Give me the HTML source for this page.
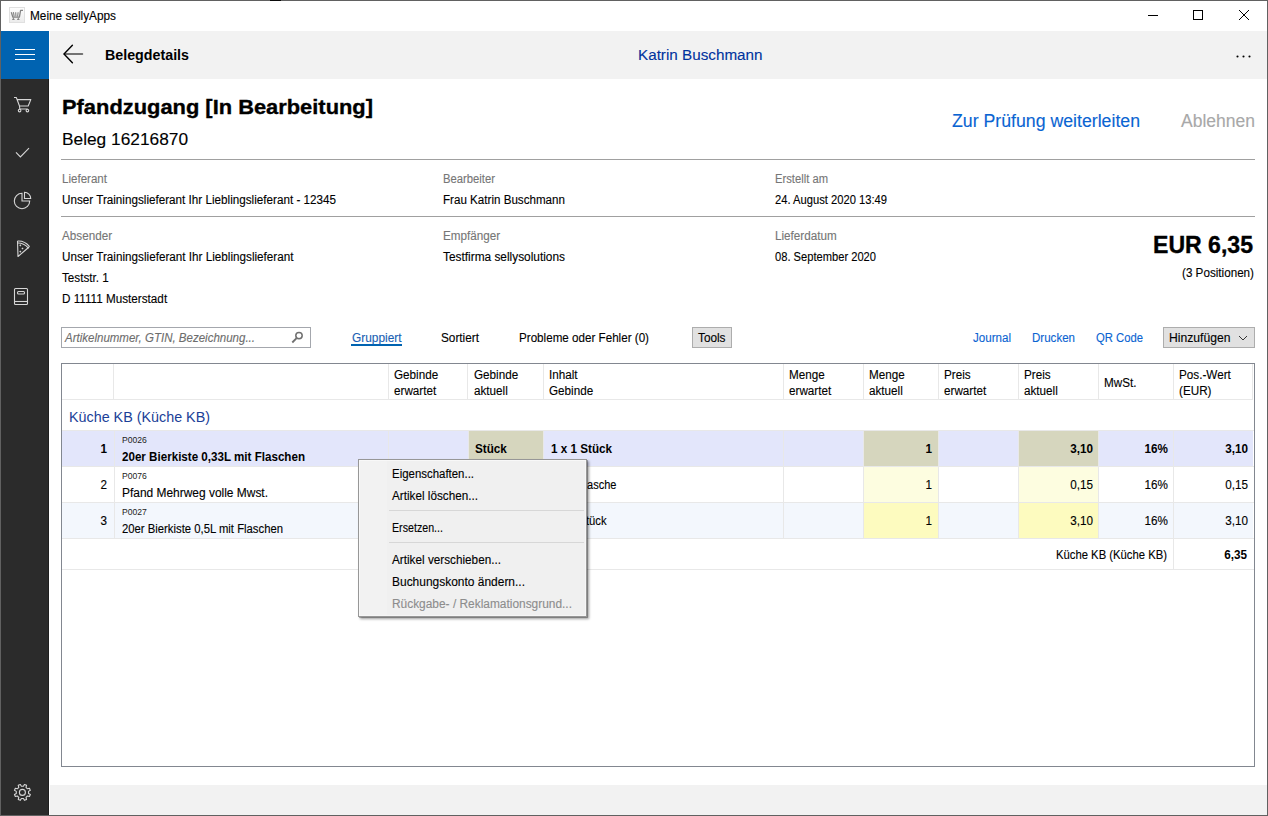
<!DOCTYPE html>
<html><head><meta charset="utf-8"><style>
html,body{margin:0;padding:0;}
body{width:1268px;height:816px;position:relative;overflow:hidden;font-family:"Liberation Sans", sans-serif;background:#fff;}
.b{position:absolute;}
svg{position:absolute;left:0;top:0;}
text{font-family:"Liberation Sans", sans-serif;}
</style></head><body>
<div class="b" style="left:0px;top:0px;width:1268px;height:816px;background:#ffffff;"></div>
<div class="b" style="left:1px;top:31px;width:48px;height:48px;background:#0063b1;"></div>
<div class="b" style="left:1px;top:79px;width:47px;height:736px;background:#2b2b2b;"></div>
<div class="b" style="left:48px;top:79px;width:1px;height:736px;background:#1f1f1f;"></div>
<div class="b" style="left:50px;top:31px;width:1217px;height:48px;background:#f2f2f2;"></div>
<div class="b" style="left:50px;top:785px;width:1217px;height:30px;background:#f2f2f2;"></div>
<div class="b" style="left:0px;top:0px;width:1268px;height:1px;background:#616161;"></div>
<div class="b" style="left:0px;top:815px;width:1268px;height:1px;background:#616161;"></div>
<div class="b" style="left:0px;top:0px;width:1px;height:816px;background:#616161;"></div>
<div class="b" style="left:1267px;top:0px;width:1px;height:816px;background:#616161;"></div>
<div class="b" style="left:270px;top:0px;width:11px;height:1px;background:#0a0a0a;"></div>
<div class="b" style="left:61px;top:159px;width:1194px;height:1px;background:#a0a0a0;"></div>
<div class="b" style="left:61px;top:216px;width:1194px;height:1px;background:#a0a0a0;"></div>
<div class="b" style="left:61px;top:327px;width:250px;height:21px;background:#fff;border:1px solid #a4a7ad;box-sizing:border-box;"></div>
<div class="b" style="left:351px;top:344px;width:51px;height:2px;background:#0063b1;"></div>
<div class="b" style="left:692px;top:327px;width:40px;height:21px;background:#e1e1e1;border:1px solid #adadad;box-sizing:border-box;"></div>
<div class="b" style="left:1163px;top:327px;width:92px;height:21px;background:#e1e1e1;border:1px solid #adadad;box-sizing:border-box;"></div>
<div class="b" style="left:61px;top:363px;width:1194px;height:404px;background:#fff;border:1px solid #828790;box-sizing:border-box;"></div>
<div class="b" style="left:62px;top:399px;width:1191px;height:1px;background:#e8e8e8;"></div>
<div class="b" style="left:113px;top:364px;width:1px;height:35px;background:#e8e8e8;"></div>
<div class="b" style="left:388px;top:364px;width:1px;height:35px;background:#e8e8e8;"></div>
<div class="b" style="left:467px;top:364px;width:1px;height:35px;background:#e8e8e8;"></div>
<div class="b" style="left:543px;top:364px;width:1px;height:35px;background:#e8e8e8;"></div>
<div class="b" style="left:783px;top:364px;width:1px;height:35px;background:#e8e8e8;"></div>
<div class="b" style="left:863px;top:364px;width:1px;height:35px;background:#e8e8e8;"></div>
<div class="b" style="left:938px;top:364px;width:1px;height:35px;background:#e8e8e8;"></div>
<div class="b" style="left:1018px;top:364px;width:1px;height:35px;background:#e8e8e8;"></div>
<div class="b" style="left:1098px;top:364px;width:1px;height:35px;background:#e8e8e8;"></div>
<div class="b" style="left:1173px;top:364px;width:1px;height:35px;background:#e8e8e8;"></div>
<div class="b" style="left:1252px;top:364px;width:1px;height:35px;background:#e8e8e8;"></div>
<div class="b" style="left:62px;top:430px;width:1192px;height:1px;background:#e8e8e8;"></div>
<div class="b" style="left:62px;top:431px;width:1191px;height:35px;background:#e3e6fb;"></div>
<div class="b" style="left:469px;top:431px;width:74px;height:35px;background:#d6d6be;"></div>
<div class="b" style="left:864px;top:431px;width:74px;height:35px;background:#d6d6be;"></div>
<div class="b" style="left:1019px;top:431px;width:79px;height:35px;background:#d6d6be;"></div>
<div class="b" style="left:114px;top:431px;width:1px;height:35px;background:#e8e8e8;"></div>
<div class="b" style="left:388px;top:431px;width:1px;height:35px;background:#e8e8e8;"></div>
<div class="b" style="left:468px;top:431px;width:1px;height:35px;background:#e8e8e8;"></div>
<div class="b" style="left:543px;top:431px;width:1px;height:35px;background:#e8e8e8;"></div>
<div class="b" style="left:783px;top:431px;width:1px;height:35px;background:#e8e8e8;"></div>
<div class="b" style="left:863px;top:431px;width:1px;height:35px;background:#e8e8e8;"></div>
<div class="b" style="left:938px;top:431px;width:1px;height:35px;background:#e8e8e8;"></div>
<div class="b" style="left:1018px;top:431px;width:1px;height:35px;background:#e8e8e8;"></div>
<div class="b" style="left:1098px;top:431px;width:1px;height:35px;background:#e8e8e8;"></div>
<div class="b" style="left:1173px;top:431px;width:1px;height:35px;background:#e8e8e8;"></div>
<div class="b" style="left:62px;top:466px;width:1192px;height:1px;background:#e8e8e8;"></div>
<div class="b" style="left:62px;top:467px;width:1191px;height:35px;background:#ffffff;"></div>
<div class="b" style="left:469px;top:467px;width:74px;height:35px;background:#fdfde0;"></div>
<div class="b" style="left:864px;top:467px;width:74px;height:35px;background:#fdfde0;"></div>
<div class="b" style="left:1019px;top:467px;width:79px;height:35px;background:#fdfde0;"></div>
<div class="b" style="left:114px;top:467px;width:1px;height:35px;background:#e8e8e8;"></div>
<div class="b" style="left:388px;top:467px;width:1px;height:35px;background:#e8e8e8;"></div>
<div class="b" style="left:468px;top:467px;width:1px;height:35px;background:#e8e8e8;"></div>
<div class="b" style="left:543px;top:467px;width:1px;height:35px;background:#e8e8e8;"></div>
<div class="b" style="left:783px;top:467px;width:1px;height:35px;background:#e8e8e8;"></div>
<div class="b" style="left:863px;top:467px;width:1px;height:35px;background:#e8e8e8;"></div>
<div class="b" style="left:938px;top:467px;width:1px;height:35px;background:#e8e8e8;"></div>
<div class="b" style="left:1018px;top:467px;width:1px;height:35px;background:#e8e8e8;"></div>
<div class="b" style="left:1098px;top:467px;width:1px;height:35px;background:#e8e8e8;"></div>
<div class="b" style="left:1173px;top:467px;width:1px;height:35px;background:#e8e8e8;"></div>
<div class="b" style="left:62px;top:502px;width:1192px;height:1px;background:#e8e8e8;"></div>
<div class="b" style="left:62px;top:503px;width:1191px;height:35px;background:#f3f7fd;"></div>
<div class="b" style="left:469px;top:503px;width:74px;height:35px;background:#fdfbbf;"></div>
<div class="b" style="left:864px;top:503px;width:74px;height:35px;background:#fdfbbf;"></div>
<div class="b" style="left:1019px;top:503px;width:79px;height:35px;background:#fdfbbf;"></div>
<div class="b" style="left:114px;top:503px;width:1px;height:35px;background:#e8e8e8;"></div>
<div class="b" style="left:388px;top:503px;width:1px;height:35px;background:#e8e8e8;"></div>
<div class="b" style="left:468px;top:503px;width:1px;height:35px;background:#e8e8e8;"></div>
<div class="b" style="left:543px;top:503px;width:1px;height:35px;background:#e8e8e8;"></div>
<div class="b" style="left:783px;top:503px;width:1px;height:35px;background:#e8e8e8;"></div>
<div class="b" style="left:863px;top:503px;width:1px;height:35px;background:#e8e8e8;"></div>
<div class="b" style="left:938px;top:503px;width:1px;height:35px;background:#e8e8e8;"></div>
<div class="b" style="left:1018px;top:503px;width:1px;height:35px;background:#e8e8e8;"></div>
<div class="b" style="left:1098px;top:503px;width:1px;height:35px;background:#e8e8e8;"></div>
<div class="b" style="left:1173px;top:503px;width:1px;height:35px;background:#e8e8e8;"></div>
<div class="b" style="left:62px;top:538px;width:1192px;height:1px;background:#e8e8e8;"></div>
<div class="b" style="left:1173px;top:539px;width:1px;height:30px;background:#e8e8e8;"></div>
<div class="b" style="left:62px;top:569px;width:1192px;height:1px;background:#e8e8e8;"></div>
<div class="b" style="left:9px;top:7px;width:16px;height:16px;background:linear-gradient(#fdfdfd,#ececec);border:1px solid #e0e0e0;box-sizing:border-box;"></div>
<svg width="1268" height="816">
<text x="30" y="20" font-size="12" fill="#000" stroke="#000" stroke-width="0.12" textLength="86" lengthAdjust="spacingAndGlyphs">Meine sellyApps</text>
<text x="105" y="60" font-size="14.7" fill="#000" font-weight="bold" textLength="84" lengthAdjust="spacingAndGlyphs">Belegdetails</text>
<text x="638" y="60" font-size="14.7" fill="#00339e" stroke="#00339e" stroke-width="0.12" textLength="124.5" lengthAdjust="spacingAndGlyphs">Katrin Buschmann</text>
<text x="62" y="114" font-size="21" fill="#000" stroke="#000" stroke-width="0.35" font-weight="bold" textLength="311" lengthAdjust="spacingAndGlyphs">Pfandzugang [In Bearbeitung]</text>
<text x="62" y="145" font-size="17" fill="#000" stroke="#000" stroke-width="0.12" textLength="126" lengthAdjust="spacingAndGlyphs">Beleg 16216870</text>
<text x="952" y="127" font-size="17.6" fill="#0a64d2" stroke="#0a64d2" stroke-width="0.12" textLength="188" lengthAdjust="spacingAndGlyphs">Zur Prüfung weiterleiten</text>
<text x="1181" y="127" font-size="17.6" fill="#a8a8a8" stroke="#a8a8a8" stroke-width="0.12" textLength="74" lengthAdjust="spacingAndGlyphs">Ablehnen</text>
<text x="62" y="183" font-size="12" fill="#767676" stroke="#767676" stroke-width="0.12" textLength="45" lengthAdjust="spacingAndGlyphs">Lieferant</text>
<text x="62" y="204" font-size="12" fill="#000" stroke="#000" stroke-width="0.12" textLength="274" lengthAdjust="spacingAndGlyphs">Unser Trainingslieferant Ihr Lieblingslieferant - 12345</text>
<text x="443" y="183" font-size="12" fill="#767676" stroke="#767676" stroke-width="0.12" textLength="52" lengthAdjust="spacingAndGlyphs">Bearbeiter</text>
<text x="443" y="204" font-size="12" fill="#000" stroke="#000" stroke-width="0.12" textLength="122" lengthAdjust="spacingAndGlyphs">Frau Katrin Buschmann</text>
<text x="775" y="183" font-size="12" fill="#767676" stroke="#767676" stroke-width="0.12" textLength="53" lengthAdjust="spacingAndGlyphs">Erstellt am</text>
<text x="775" y="204" font-size="12" fill="#000" stroke="#000" stroke-width="0.12" textLength="112" lengthAdjust="spacingAndGlyphs">24. August 2020 13:49</text>
<text x="62" y="240" font-size="12" fill="#767676" stroke="#767676" stroke-width="0.12" textLength="50.09" lengthAdjust="spacingAndGlyphs">Absender</text>
<text x="62" y="261" font-size="12" fill="#000" stroke="#000" stroke-width="0.12" textLength="231.53" lengthAdjust="spacingAndGlyphs">Unser Trainingslieferant Ihr Lieblingslieferant</text>
<text x="62" y="282" font-size="12" fill="#000" stroke="#000" stroke-width="0.12" textLength="46.82" lengthAdjust="spacingAndGlyphs">Teststr. 1</text>
<text x="62" y="303" font-size="12" fill="#000" stroke="#000" stroke-width="0.12" textLength="105.14" lengthAdjust="spacingAndGlyphs">D 11111 Musterstadt</text>
<text x="443" y="240" font-size="12" fill="#767676" stroke="#767676" stroke-width="0.12" textLength="57.23" lengthAdjust="spacingAndGlyphs">Empfänger</text>
<text x="443" y="261" font-size="12" fill="#000" stroke="#000" stroke-width="0.12" textLength="122" lengthAdjust="spacingAndGlyphs">Testfirma sellysolutions</text>
<text x="775" y="240" font-size="12" fill="#767676" stroke="#767676" stroke-width="0.12" textLength="61.79" lengthAdjust="spacingAndGlyphs">Lieferdatum</text>
<text x="775" y="261" font-size="12" fill="#000" stroke="#000" stroke-width="0.12" textLength="101" lengthAdjust="spacingAndGlyphs">08. September 2020</text>
<text x="1253" y="253" font-size="23" fill="#000" stroke="#000" stroke-width="0.35" font-weight="bold" text-anchor="end" textLength="100" lengthAdjust="spacingAndGlyphs">EUR 6,35</text>
<text x="1254" y="277" font-size="12" fill="#000" stroke="#000" stroke-width="0.12" text-anchor="end" textLength="72" lengthAdjust="spacingAndGlyphs">(3 Positionen)</text>
<text x="65" y="342" font-size="12" fill="#6d6d6d" stroke="#6d6d6d" stroke-width="0.12" font-style="italic" textLength="190" lengthAdjust="spacingAndGlyphs">Artikelnummer, GTIN, Bezeichnung...</text>
<text x="352" y="341.5" font-size="12" fill="#1a5fb4" stroke="#1a5fb4" stroke-width="0.12" textLength="49.5" lengthAdjust="spacingAndGlyphs">Gruppiert</text>
<text x="441" y="341.5" font-size="12" fill="#000" stroke="#000" stroke-width="0.12" textLength="38" lengthAdjust="spacingAndGlyphs">Sortiert</text>
<text x="519" y="341.5" font-size="12" fill="#000" stroke="#000" stroke-width="0.12" textLength="130" lengthAdjust="spacingAndGlyphs">Probleme oder Fehler (0)</text>
<text x="698" y="341.5" font-size="12" fill="#000" stroke="#000" stroke-width="0.12" textLength="27.5" lengthAdjust="spacingAndGlyphs">Tools</text>
<text x="973" y="341.5" font-size="12" fill="#0a64d2" stroke="#0a64d2" stroke-width="0.12" textLength="38" lengthAdjust="spacingAndGlyphs">Journal</text>
<text x="1032" y="341.5" font-size="12" fill="#0a64d2" stroke="#0a64d2" stroke-width="0.12" textLength="43" lengthAdjust="spacingAndGlyphs">Drucken</text>
<text x="1096" y="341.5" font-size="12" fill="#0a64d2" stroke="#0a64d2" stroke-width="0.12" textLength="47" lengthAdjust="spacingAndGlyphs">QR Code</text>
<text x="1169" y="341.5" font-size="12" fill="#000" stroke="#000" stroke-width="0.12" textLength="61.5" lengthAdjust="spacingAndGlyphs">Hinzufügen</text>
<text x="394" y="379" font-size="12" fill="#000" stroke="#000" stroke-width="0.12" textLength="44.24" lengthAdjust="spacingAndGlyphs">Gebinde</text>
<text x="394" y="395" font-size="12" fill="#000" stroke="#000" stroke-width="0.12" textLength="42.27" lengthAdjust="spacingAndGlyphs">erwartet</text>
<text x="474" y="379" font-size="12" fill="#000" stroke="#000" stroke-width="0.12" textLength="44.24" lengthAdjust="spacingAndGlyphs">Gebinde</text>
<text x="474" y="395" font-size="12" fill="#000" stroke="#000" stroke-width="0.12" textLength="33.82" lengthAdjust="spacingAndGlyphs">aktuell</text>
<text x="549" y="379" font-size="12" fill="#000" stroke="#000" stroke-width="0.12" textLength="28.62" lengthAdjust="spacingAndGlyphs">Inhalt</text>
<text x="549" y="395" font-size="12" fill="#000" stroke="#000" stroke-width="0.12" textLength="44.24" lengthAdjust="spacingAndGlyphs">Gebinde</text>
<text x="789" y="379" font-size="12" fill="#000" stroke="#000" stroke-width="0.12" textLength="35.78" lengthAdjust="spacingAndGlyphs">Menge</text>
<text x="789" y="395" font-size="12" fill="#000" stroke="#000" stroke-width="0.12" textLength="42.27" lengthAdjust="spacingAndGlyphs">erwartet</text>
<text x="869" y="379" font-size="12" fill="#000" stroke="#000" stroke-width="0.12" textLength="35.78" lengthAdjust="spacingAndGlyphs">Menge</text>
<text x="869" y="395" font-size="12" fill="#000" stroke="#000" stroke-width="0.12" textLength="33.82" lengthAdjust="spacingAndGlyphs">aktuell</text>
<text x="944" y="379" font-size="12" fill="#000" stroke="#000" stroke-width="0.12" textLength="26.66" lengthAdjust="spacingAndGlyphs">Preis</text>
<text x="944" y="395" font-size="12" fill="#000" stroke="#000" stroke-width="0.12" textLength="42.27" lengthAdjust="spacingAndGlyphs">erwartet</text>
<text x="1024" y="379" font-size="12" fill="#000" stroke="#000" stroke-width="0.12" textLength="26.66" lengthAdjust="spacingAndGlyphs">Preis</text>
<text x="1024" y="395" font-size="12" fill="#000" stroke="#000" stroke-width="0.12" textLength="33.82" lengthAdjust="spacingAndGlyphs">aktuell</text>
<text x="1179" y="379" font-size="12" fill="#000" stroke="#000" stroke-width="0.12" textLength="51.79" lengthAdjust="spacingAndGlyphs">Pos.-Wert</text>
<text x="1179" y="395" font-size="12" fill="#000" stroke="#000" stroke-width="0.12" textLength="32.5" lengthAdjust="spacingAndGlyphs">(EUR)</text>
<text x="1104" y="387" font-size="12" fill="#000" stroke="#000" stroke-width="0.12" textLength="32.5" lengthAdjust="spacingAndGlyphs">MwSt.</text>
<text x="69" y="421.5" font-size="14.5" fill="#1b3f98" textLength="141" lengthAdjust="spacingAndGlyphs">Küche KB (Küche KB)</text>
<text x="107" y="453" font-size="12" fill="#000" font-weight="bold" text-anchor="end" textLength="6.51" lengthAdjust="spacingAndGlyphs">1</text>
<text x="122" y="443" font-size="8.6" fill="#222">P0026</text>
<text x="122" y="461" font-size="12" fill="#000" font-weight="bold" textLength="183" lengthAdjust="spacingAndGlyphs">20er Bierkiste 0,33L mit Flaschen</text>
<text x="475" y="453" font-size="12" fill="#000" font-weight="bold" textLength="31.86" lengthAdjust="spacingAndGlyphs">Stück</text>
<text x="551" y="453" font-size="12" fill="#000" font-weight="bold" textLength="61" lengthAdjust="spacingAndGlyphs">1 x 1 Stück</text>
<text x="932" y="453" font-size="12" fill="#000" font-weight="bold" text-anchor="end" textLength="6.51" lengthAdjust="spacingAndGlyphs">1</text>
<text x="1093" y="453" font-size="12" fill="#000" font-weight="bold" text-anchor="end" textLength="22.77" lengthAdjust="spacingAndGlyphs">3,10</text>
<text x="1168" y="453" font-size="12" fill="#000" font-weight="bold" text-anchor="end" textLength="23.42" lengthAdjust="spacingAndGlyphs">16%</text>
<text x="1248" y="453" font-size="12" fill="#000" font-weight="bold" text-anchor="end" textLength="22.77" lengthAdjust="spacingAndGlyphs">3,10</text>
<text x="107" y="489" font-size="12" fill="#000" stroke="#000" stroke-width="0.12" text-anchor="end" textLength="6.51" lengthAdjust="spacingAndGlyphs">2</text>
<text x="122" y="479" font-size="8.6" fill="#222">P0076</text>
<text x="122" y="497" font-size="12" fill="#000" stroke="#000" stroke-width="0.12" textLength="146" lengthAdjust="spacingAndGlyphs">Pfand Mehrweg volle Mwst.</text>
<text x="475" y="489" font-size="12" fill="#000" stroke="#000" stroke-width="0.12" textLength="40.97" lengthAdjust="spacingAndGlyphs">Flasche</text>
<text x="551" y="489" font-size="12" fill="#000" stroke="#000" stroke-width="0.12" textLength="65.5" lengthAdjust="spacingAndGlyphs">1 x 1 Flasche</text>
<text x="932" y="489" font-size="12" fill="#000" stroke="#000" stroke-width="0.12" text-anchor="end" textLength="6.51" lengthAdjust="spacingAndGlyphs">1</text>
<text x="1093" y="489" font-size="12" fill="#000" stroke="#000" stroke-width="0.12" text-anchor="end" textLength="22.77" lengthAdjust="spacingAndGlyphs">0,15</text>
<text x="1168" y="489" font-size="12" fill="#000" stroke="#000" stroke-width="0.12" text-anchor="end" textLength="23.42" lengthAdjust="spacingAndGlyphs">16%</text>
<text x="1248" y="489" font-size="12" fill="#000" stroke="#000" stroke-width="0.12" text-anchor="end" textLength="22.77" lengthAdjust="spacingAndGlyphs">0,15</text>
<text x="107" y="525" font-size="12" fill="#000" stroke="#000" stroke-width="0.12" text-anchor="end" textLength="6.51" lengthAdjust="spacingAndGlyphs">3</text>
<text x="122" y="515" font-size="8.6" fill="#222">P0027</text>
<text x="122" y="533" font-size="12" fill="#000" stroke="#000" stroke-width="0.12" textLength="161" lengthAdjust="spacingAndGlyphs">20er Bierkiste 0,5L mit Flaschen</text>
<text x="475" y="525" font-size="12" fill="#000" stroke="#000" stroke-width="0.12" textLength="29.26" lengthAdjust="spacingAndGlyphs">Stück</text>
<text x="551" y="525" font-size="12" fill="#000" stroke="#000" stroke-width="0.12" textLength="55.5" lengthAdjust="spacingAndGlyphs">1 x 1 Stück</text>
<text x="932" y="525" font-size="12" fill="#000" stroke="#000" stroke-width="0.12" text-anchor="end" textLength="6.51" lengthAdjust="spacingAndGlyphs">1</text>
<text x="1093" y="525" font-size="12" fill="#000" stroke="#000" stroke-width="0.12" text-anchor="end" textLength="22.77" lengthAdjust="spacingAndGlyphs">3,10</text>
<text x="1168" y="525" font-size="12" fill="#000" stroke="#000" stroke-width="0.12" text-anchor="end" textLength="23.42" lengthAdjust="spacingAndGlyphs">16%</text>
<text x="1248" y="525" font-size="12" fill="#000" stroke="#000" stroke-width="0.12" text-anchor="end" textLength="22.77" lengthAdjust="spacingAndGlyphs">3,10</text>
<text x="1167" y="559" font-size="12" fill="#000" stroke="#000" stroke-width="0.12" text-anchor="end" textLength="111" lengthAdjust="spacingAndGlyphs">Küche KB (Küche KB)</text>
<text x="1247" y="559" font-size="12" fill="#000" font-weight="bold" text-anchor="end" textLength="22.77" lengthAdjust="spacingAndGlyphs">6,35</text>
<g fill="none" stroke="#858585" stroke-width="1.3" stroke-linejoin="round"><path d="M11.3 12.2 L12.9 17.2 H19.4 L20.6 10.4 H23"/><path d="M13.4 12.2 L14.2 16.6 M15.7 12.2 L15.9 16.6 M18.1 12.2 L17.6 16.6" stroke-width="1.1"/><path d="M13.4 17.5 V20 M12.2 19.4 H14.6 M18.3 17.5 V20 M17.1 19.4 H19.5" stroke-width="1"/></g>
<g fill="none" stroke="#000" stroke-width="1"><path d="M1148 15.5 H1158"/><rect x="1193.5" y="10.5" width="9" height="9"/><path d="M1239 10 L1249 20 M1249 10 L1239 20"/></g>
<g stroke="#fff" stroke-width="1"><path d="M15 49.5 H35 M15 54.5 H35 M15 59.5 H35"/></g>
<g fill="none" stroke-width="1.4" stroke-linecap="round"><path d="M64.5 54 H82.5" stroke="#4a4a4a" stroke-width="1.5"/><path d="M72.4 45.3 L64 54 L72.4 62.7" stroke="#000"/></g>
<g fill="#000"><circle cx="1237.5" cy="56.5" r="1.05"/><circle cx="1243.5" cy="56.5" r="1.05"/><circle cx="1249.5" cy="56.5" r="1.05"/></g>
<g fill="none" stroke="#d6d6d6" stroke-width="1.1" stroke-linejoin="round"><path d="M14 97.5 H16.3 L19.5 106 H28.2 L30.8 99.6 H16.9"/><path d="M19.5 106 L19.8 109 H27.6"/><circle cx="19.6" cy="110.6" r="1.3"/><circle cx="27.4" cy="110.6" r="1.3"/></g>
<path d="M16 152.3 L20.4 157 L29 148.2" fill="none" stroke="#d6d6d6" stroke-width="1.1"/>
<g fill="none" stroke="#d6d6d6" stroke-width="1.1"><path d="M22 193.3 A7.7 7.7 0 1 0 29.7 201 H22 Z"/><path d="M24.5 192.3 V198.5 H30.7 A6.2 6.2 0 0 0 24.5 192.3 Z"/></g>
<g fill="none" stroke="#d6d6d6" stroke-width="1.1" stroke-linejoin="round"><path d="M17.5 241 L18 256.5 L28.5 247.5"/><path d="M17.5 241 Q24.5 240.5 29.3 246.3 L28.2 247.8 Q23.5 242.8 17.7 243"/></g><g fill="#d6d6d6"><rect x="19.6" y="244.6" width="1.5" height="1.5" transform="rotate(45 20.3 245.3)"/><rect x="21.8" y="247.7" width="1.5" height="1.5" transform="rotate(45 22.5 248.4)"/><rect x="19.6" y="250.8" width="1.5" height="1.5" transform="rotate(45 20.3 251.5)"/></g>
<g fill="none" stroke="#d6d6d6" stroke-width="1.1"><rect x="14.5" y="288.5" width="13" height="16" rx="1"/><path d="M14.5 301.5 H27.5"/><rect x="17.5" y="291.5" width="7" height="2.5" rx="1"/></g>
<g fill="none" stroke="#d6d6d6" stroke-width="1.1" stroke-linejoin="round"><path d="M23.42 786.29 L24.45 784.46 L26.56 785.33 L26.00 787.35 L27.45 788.80 L29.47 788.24 L30.34 790.35 L28.51 791.38 L28.51 793.42 L30.34 794.45 L29.47 796.56 L27.45 796.00 L26.00 797.45 L26.56 799.47 L24.45 800.34 L23.42 798.51 L21.38 798.51 L20.35 800.34 L18.24 799.47 L18.80 797.45 L17.35 796.00 L15.33 796.56 L14.46 794.45 L16.29 793.42 L16.29 791.38 L14.46 790.35 L15.33 788.24 L17.35 788.80 L18.80 787.35 L18.24 785.33 L20.35 784.46 L21.38 786.29 Z"/><circle cx="22.4" cy="792.4" r="3"/></g>
<g fill="none" stroke="#707070" stroke-width="1.5"><circle cx="299" cy="335.6" r="3.2"/><path d="M296.6 338.2 L292.3 342.5" stroke-width="1.9"/></g>
<path d="M1239 336 L1243 340 L1247 336" fill="none" stroke="#333" stroke-width="1"/>
</svg>
<div class="b" style="left:358px;top:459px;width:229px;height:158px;background:#f0f0f0;border:1px solid #979797;box-sizing:border-box;box-shadow:1px 1px 0 rgba(0,0,0,0.25), 2px 2px 2.5px rgba(0,0,0,0.38), inset 1px 1px 0 #f8f8f8, inset -1px -1px 0 #f6f6f6;"></div>
<div class="b" style="left:360px;top:461px;width:27px;height:154px;background:#f2f2f2;"></div>
<div class="b" style="left:389px;top:510px;width:195px;height:1px;background:#d7d7d7;"></div>
<div class="b" style="left:389px;top:542px;width:195px;height:1px;background:#d7d7d7;"></div>
<svg width="1268" height="816">
<text x="392" y="478" font-size="12" fill="#000" stroke="#000" stroke-width="0.12" textLength="82" lengthAdjust="spacingAndGlyphs">Eigenschaften...</text>
<text x="392" y="500" font-size="12" fill="#000" stroke="#000" stroke-width="0.12" textLength="86" lengthAdjust="spacingAndGlyphs">Artikel löschen...</text>
<text x="392" y="532" font-size="12" fill="#000" stroke="#000" stroke-width="0.12" textLength="51" lengthAdjust="spacingAndGlyphs">Ersetzen...</text>
<text x="392" y="564" font-size="12" fill="#000" stroke="#000" stroke-width="0.12" textLength="109" lengthAdjust="spacingAndGlyphs">Artikel verschieben...</text>
<text x="392" y="586" font-size="12" fill="#000" stroke="#000" stroke-width="0.12" textLength="133" lengthAdjust="spacingAndGlyphs">Buchungskonto ändern...</text>
<text x="392" y="608" font-size="12" fill="#8d8d8d" stroke="#8d8d8d" stroke-width="0.12" textLength="180" lengthAdjust="spacingAndGlyphs">Rückgabe- / Reklamationsgrund...</text>
</svg>

</body></html>
